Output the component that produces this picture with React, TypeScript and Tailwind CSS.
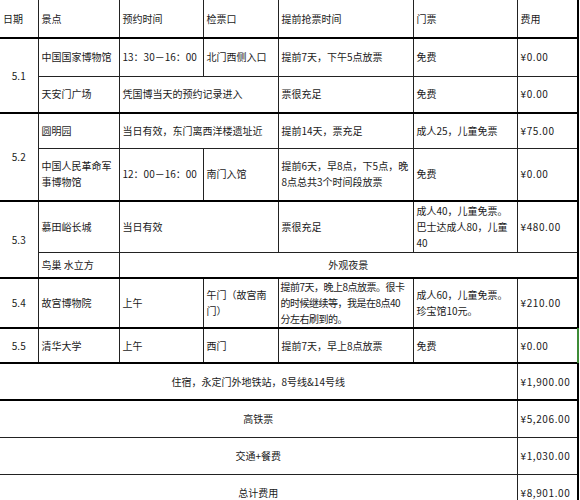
import React from 'react';

const cell = 'border border-[#222] px-[3px] align-middle leading-[16px]';
const last = 'border-r-2 border-r-black tracking-[0.6px]';
const first = 'border-l-0 text-center';

function Row({ h, top, children }: { h: string; top?: boolean; children: React.ReactNode }) {
  return <tr className={`${h} ${top ? '[&>td]:border-t-2 [&>td]:border-t-black' : ''}`}>{children}</tr>;
}

export default function App() {
  return (
    <div
      className="relative w-[580px] h-[500px] overflow-hidden bg-white text-[10px] text-[#1a1a1a]"
      style={{ fontFamily: '"Noto Sans CJK SC", "Noto Sans", sans-serif' }}
    >
      <table className="w-[578px] table-fixed border-collapse">
        <colgroup>
          <col className="w-[38px]" />
          <col className="w-[81px]" />
          <col className="w-[84px]" />
          <col className="w-[75px]" />
          <col className="w-[135px]" />
          <col className="w-[104px]" />
          <col className="w-[61px]" />
        </colgroup>
        <tbody>
          {/* header */}
          <tr className="h-[38px] [&>td]:border-t-0">
            <td className={`${cell} border-l-0`}>日期</td>
            <td className={cell}>景点</td>
            <td className={cell}>预约时间</td>
            <td className={cell}>检票口</td>
            <td className={cell}>提前抢票时间</td>
            <td className={cell}>门票</td>
            <td className={`${cell} border-r-2 border-r-black`}>费用</td>
          </tr>

          {/* 5.1 */}
          <Row h="h-[38px]" top>
            <td rowSpan={2} className={`${cell} ${first}`}>5.1</td>
            <td className={cell}>中国国家博物馆</td>
            <td className={cell}>13：30－16：00</td>
            <td className={cell}>北门西侧入口</td>
            <td className={cell}>提前7天，下午5点放票</td>
            <td className={cell}>免费</td>
            <td className={`${cell} ${last}`}>¥0.00</td>
          </Row>
          <Row h="h-[37px]">
            <td className={cell}>天安门广场</td>
            <td colSpan={2} className={cell}>凭国博当天的预约记录进入</td>
            <td className={cell}>票很充足</td>
            <td className={cell}>免费</td>
            <td className={`${cell} ${last}`}>¥0.00</td>
          </Row>

          {/* 5.2 */}
          <Row h="h-[35px]" top>
            <td rowSpan={2} className={`${cell} ${first}`}>5.2</td>
            <td className={cell}>圆明园</td>
            <td colSpan={2} className={cell}>当日有效，东门离西洋楼遗址近</td>
            <td className={cell}>提前14天，票充足</td>
            <td className={cell}>成人25，儿童免票</td>
            <td className={`${cell} ${last}`}>¥75.00</td>
          </Row>
          <Row h="h-[53px]">
            <td className={cell}>中国人民革命军事博物馆</td>
            <td className={cell}>12：00－16：00</td>
            <td className={cell}>南门入馆</td>
            <td className={cell}>提前6天，早8点，下5点，晚8点总共3个时间段放票</td>
            <td className={cell}>免费</td>
            <td className={`${cell} ${last}`}>¥0.00</td>
          </Row>

          {/* 5.3 */}
          <Row h="h-[51px]" top>
            <td rowSpan={2} className={`${cell} ${first}`}>5.3</td>
            <td className={cell}>慕田峪长城</td>
            <td colSpan={2} className={cell}>当日有效</td>
            <td className={cell}>票很充足</td>
            <td className={cell}>成人40，儿童免票。巴士达成人80，儿童40</td>
            <td className={`${cell} ${last}`}>¥480.00</td>
          </Row>
          <Row h="h-[26px]">
            <td className={cell}>鸟巢 水立方</td>
            <td colSpan={5} className={`${cell} border-r-2 border-r-black text-center`}>外观夜景</td>
          </Row>

          {/* 5.4 */}
          <Row h="h-[50px]" top>
            <td className={`${cell} ${first}`}>5.4</td>
            <td className={cell}>故宫博物院</td>
            <td className={cell}>上午</td>
            <td className={cell}>午门（故宫南门）</td>
            <td className={`${cell} pl-[2px] pr-0 whitespace-nowrap tracking-[-0.5px]`}>
              提前7天，晚上8点放票。很卡
              <br />
              的时候继续等，我是在8点40
              <br />
              分左右刷到的。
            </td>
            <td className={cell}>成人60，儿童免票。珍宝馆10元。</td>
            <td className={`${cell} ${last}`}>¥210.00</td>
          </Row>

          {/* 5.5 */}
          <Row h="h-[35px]" top>
            <td className={`${cell} ${first}`}>5.5</td>
            <td className={cell}>清华大学</td>
            <td className={cell}>上午</td>
            <td className={cell}>西门</td>
            <td className={cell}>提前7天，早上8点放票</td>
            <td className={cell}>免费</td>
            <td className={`${cell} ${last}`}>¥0.00</td>
          </Row>

          {/* totals */}
          <Row h="h-[37px]" top>
            <td colSpan={6} className={`${cell} ${first}`}>住宿，永定门外地铁站，8号线&amp;14号线</td>
            <td className={`${cell} ${last}`}>¥1,900.00</td>
          </Row>
          <Row h="h-[37px]" top>
            <td colSpan={6} className={`${cell} ${first}`}>高铁票</td>
            <td className={`${cell} ${last}`}>¥5,206.00</td>
          </Row>
          <tr className="h-[37px] [&>td]:border-t-[#666]">
            <td colSpan={6} className={`${cell} ${first}`}>交通+餐费</td>
            <td className={`${cell} ${last}`}>¥1,030.00</td>
          </tr>
          <tr className="h-[37px] [&>td]:border-t-[#666]">
            <td colSpan={6} className={`${cell} ${first}`}>总计费用</td>
            <td className={`${cell} ${last}`}>¥8,901.00</td>
          </tr>
        </tbody>
      </table>
      {/* selected-cell marker */}
      <div className="absolute left-[577px] top-[328px] w-[2px] h-[35px] bg-[#3d8b37]" />
    </div>
  );
}
